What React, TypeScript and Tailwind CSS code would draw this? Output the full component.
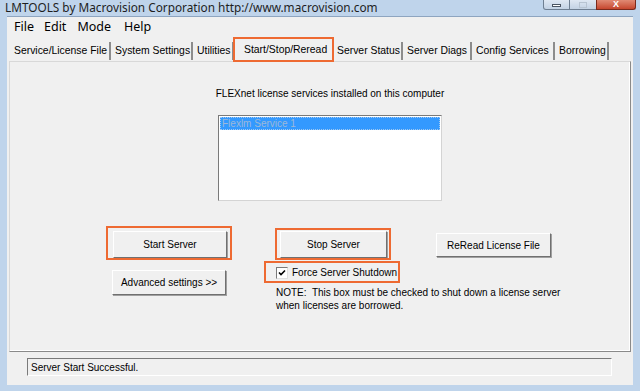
import React from 'react';

const tabs = [
  { label: 'Service/License File', w: 'w-[101px]' },
  { label: 'System Settings', w: 'w-[82px]' },
  { label: 'Utilities', w: 'w-[41px]' },
  { label: 'Start/Stop/Reread', w: 'w-[99px]', active: true },
  { label: 'Server Status', w: 'w-[70px]' },
  { label: 'Server Diags', w: 'w-[69px]' },
  { label: 'Config Services', w: 'w-[83px]' },
  { label: 'Borrowing', w: 'w-[54px]' },
];

function WinButton({ children, className }: { children: React.ReactNode; className: string }) {
  return (
    <div
      className={`flex items-center justify-center bg-[#f0f0f0] border border-t-[#ffffff] border-l-[#ffffff] border-r-[#707070] border-b-[#707070] shadow-[1px_1px_0_#a0a0a0] text-[10px] text-black ${className}`}
    >
      {children}
    </div>
  );
}

function Highlight({ className }: { className: string }) {
  return <span className={`absolute border-[2.5px] border-[#ee6a32] pointer-events-none ${className}`} />;
}

export default function App() {
  return (
    <div className="relative w-[640px] h-[391px] overflow-hidden bg-[#bfd4eb] flex flex-col font-['Liberation_Sans',Arial,sans-serif]">
      {/* Title bar */}
      <div className="h-[16px] flex items-center px-[5px] text-[11.8px] text-[#1e1e1e] font-['Noto_Sans',sans-serif] leading-none">
        LMTOOLS by Macrovision Corporation http://www.macrovision.com
      </div>
      <div className="absolute top-0 right-[4px] flex h-[10px]">
        <div className="w-[27px] h-full rounded-bl-[3px] border border-t-0 border-[#6f7f92] bg-gradient-to-b from-[#dfe8f3] to-[#c3d2e4] flex items-center justify-center">
          <span className="w-[9px] h-[3px] bg-white border border-[#4b5563] mt-[2px]" />
        </div>
        <div className="w-[26px] h-full border-b border-[#6f7f92] bg-gradient-to-b from-[#dfe8f3] to-[#c3d2e4] flex items-center justify-center">
          <span className="w-[8px] h-[6px] border border-[#b8c4d2]" />
        </div>
        <div className="w-[40px] h-full rounded-br-[3px] border border-t-0 border-[#7a2a1c] bg-gradient-to-b from-[#e08a74] to-[#c5452d] flex items-center justify-center text-white text-[9px] font-bold leading-none">
          X
        </div>
      </div>

      {/* Client area */}
      <div className="flex-1 mx-[7px] mb-[6px] bg-[#f0f0f0] border-t border-[#8ea5c0] flex flex-col">
        <div className="h-[21px] flex items-center pl-[7px] gap-[10px] text-[12.5px] text-black font-['Noto_Sans',sans-serif] leading-none">
          <span>File</span>
          <span>Edit</span>
          <span className="ml-[1px]">Mode</span>
          <span className="ml-[3px]">Help</span>
        </div>

        {/* Tabs */}
        <div className="h-[23px] flex items-end pl-[3px]">
          {tabs.map((t) => (
            <div
              key={t.label}
              className={`relative ${t.w} flex items-center text-[10.4px] text-black whitespace-nowrap ${
                t.active ? 'h-[22px] pl-[10px] bg-[#f0f0f0]' : 'pl-[4px] border-r-2 border-r-[#8c8c8c] mb-[1px] h-[18px]'
              }`}
            >
              {t.label}
              {t.active && <Highlight className="-left-[1px] -top-[2px] -right-[1px] -bottom-[1px]" />}
            </div>
          ))}
        </div>

        {/* Panel */}
        <div className="h-[291px] mx-[2px] border border-t-[#d8d8d8] border-l-[#d8d8d8] border-r-[#8a8a8a] border-b-[#8a8a8a] shadow-[inset_-1px_-1px_0_#ffffff] flex flex-col">
          <div className="mt-[24px] text-center text-[10px] text-black pl-[20px]">
            FLEXnet license services installed on this computer
          </div>
          <div className="mt-[14px] ml-[208px] w-[224px] h-[86px] bg-white border border-t-[#7a7a7a] border-l-[#7a7a7a] border-r-[#d4d4d4] border-b-[#d4d4d4] p-[1px]">
            <div className="h-[13px] bg-[#3399ff] text-[10px] leading-[13px] text-[#9cb8d8] pl-[2px] outline-1 outline-dotted outline-[#a0c8f0] -outline-offset-1">
              Flexlm Service 1
            </div>
          </div>

          <div className="mt-[30px] flex items-start">
            <div className="relative ml-[103px]">
              <WinButton className="w-[114px] h-[27px]">Start Server</WinButton>
              <Highlight className="-left-[7px] -top-[5px] -right-[5px] -bottom-[2px]" />
            </div>
            <div className="relative ml-[53px]">
              <WinButton className="w-[107px] h-[27px]">Stop Server</WinButton>
              <Highlight className="-left-[5px] -top-[3px] -right-[4px] -bottom-[2px]" />
            </div>
            <div className="ml-[49px] mt-[2px]">
              <WinButton className="w-[115px] h-[24px]">ReRead License File</WinButton>
            </div>
          </div>

          <div className="flex items-start">
            <div className="ml-[102px] mt-[12px]">
              <WinButton className="w-[114px] h-[25px]">Advanced settings &gt;&gt;</WinButton>
            </div>
            <div className="ml-[50px] flex flex-col items-start">
              <div className="relative mt-[8px] flex items-center h-[13px]">
                <span className="w-[12px] h-[12px] bg-white border border-t-[#7a7a7a] border-l-[#7a7a7a] border-r-[#e0e0e0] border-b-[#e0e0e0] flex items-center justify-center">
                  <svg width="8" height="8" viewBox="0 0 8 8">
                    <path d="M1 3.5 L3 5.5 L7 1.5" stroke="#000" strokeWidth="1.6" fill="none" />
                  </svg>
                </span>
                <span className="ml-[4px] text-[10px] text-black whitespace-nowrap">Force Server Shutdown</span>
                <Highlight className="-left-[12px] -top-[5px] -right-[3px] -bottom-[4px]" />
              </div>
              <div className="mt-[7px] text-[10px] leading-[13px] text-black whitespace-nowrap">
                NOTE:&nbsp; This box must be checked to shut down a license server
                <br />
                when licenses are borrowed.
              </div>
            </div>
          </div>
        </div>

        {/* Status */}
        <div className="mt-[6px] ml-[20px] w-[585px] h-[18px] flex items-center pl-[3px] border border-t-[#7a7a7a] border-l-[#7a7a7a] border-r-[#ffffff] border-b-[#ffffff] text-[10px] text-black">
          Server Start Successful.
        </div>
      </div>
    </div>
  );
}
